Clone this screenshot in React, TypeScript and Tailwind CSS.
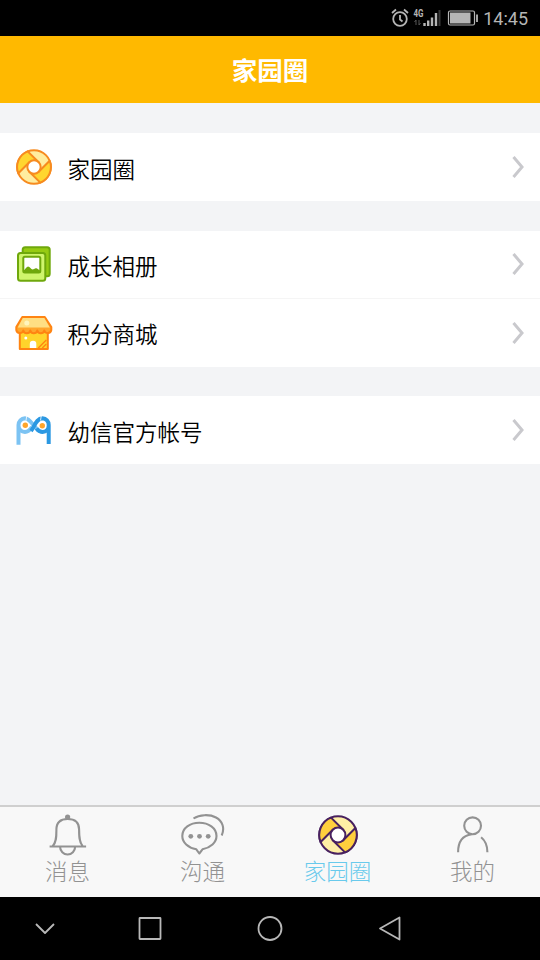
import React from "react";

const Aperture = ({ className, stroke, light, dark, width }: { className: string; stroke: string; light: string; dark: string; width: number }) => (
  <svg viewBox="-20 -20 40 40" className={className} fill="none" stroke={stroke} strokeWidth={width} strokeLinejoin="round">
    <circle r="18.7" fill={light} />
    <path d="M17.4 -7L5.2 5.2L0 7L-5.2 5.2L7 17.4A18.7 18.7 0 0 0 17.4 -7Z" fill={dark} />
    <path d="M-17.4 7L-5.2 -5.2L0 -7L5.2 -5.2L-7 -17.4A18.7 18.7 0 0 0 -17.4 7Z" fill={dark} />
    <circle r="7.4" fill="#fff" />
  </svg>
);

const Album = () => (
  <svg viewBox="0 0 40 40" className="size-10" fill="none" stroke="#6fa80c" strokeWidth="2" strokeLinejoin="round">
    <rect x="8.7" y="3.2" width="27" height="29" rx="2.5" fill="#96cb12" />
    <rect x="4" y="9" width="27.3" height="27.7" rx="2.5" fill="#cff56c" />
    <rect x="9.3" y="12.8" width="17" height="15.7" rx="1.5" fill="#fff" />
    <path d="M9.5 26.5C11.5 25.5 12 23 14 22.5C16 22.5 17 25.5 18.5 25.5S21 23.5 23 24.5L26 26.5V28.5H9.5Z" fill="#6fa80c" stroke="none" />
  </svg>
);

const Shop = () => (
  <svg viewBox="0.7 0 40 40" className="size-10" fill="none" stroke="#ff8412" strokeWidth="2" strokeLinejoin="round">
    <path d="M6.5 17H34.5V36H6.5Z" fill="#ffd42b" />
    <path d="M25 35L33 27M29 35L33 31" strokeWidth="1.3" />
    <path d="M9 4H31.5L38 14V17A3.6 3.6 0 0 1 31 17.5A3.6 3.6 0 0 1 24 17.5A3.6 3.6 0 0 1 17 17.5A3.6 3.6 0 0 1 10 17.5A3.6 3.6 0 0 1 3 17V14Z" fill="#ffa62c" />
    <path d="M9.5 5H31L36.5 14.5H4.5Z" fill="#ffdf83" stroke="none" />
    <circle cx="13.5" cy="10" r="2.5" fill="#fff5bd" stroke="none" />
    <circle cx="12.5" cy="25" r="1.5" fill="#fff" stroke="none" />
    <path d="M16.5 35V31A3.2 3.2 0 0 1 23 31V35Z" fill="#fff" stroke="none" />
  </svg>
);

const Official = () => (
  <svg viewBox="0 0 40 40" className="size-10" fill="none" strokeWidth="4">
    <path d="M4.5 34.7V15A6.7 6.7 0 0 1 11 8.3C17 8.3 22 22 28.5 22M4.5 15.5A6.7 6.7 0 0 0 11 22C14 22 16 20 18 17" stroke="#7cc3f3" />
    <path d="M17 21C20.5 17 22 8.3 28.5 8.3A6.4 6.4 0 0 1 34.7 15V34M34.7 15.5A6.5 6.5 0 0 1 28.5 22C26 22 23.5 20 22.5 18.5" stroke="#2b98e2" />
    <path d="M12.8 5.5L12 10.5M27.3 5.5L26.5 10.5" stroke="#fff" strokeWidth="0.8" />
    <circle cx="11.3" cy="15.2" r="2.7" fill="#ffa52b" />
    <circle cx="28.3" cy="15.7" r="2.7" fill="#ffa52b" />
  </svg>
);

const Bell = () => (
  <svg viewBox="0.4 0 44 44" className="size-11" fill="none" stroke="#929292" strokeWidth="2.1">
    <circle cx="22" cy="4" r="2.6" fill="#929292" stroke="none" />
    <path d="M4 33.5H40.5M7 33.2C11 29 10.8 23 10.8 16.5C10.8 9.5 15 6 22 6S33.5 9.5 33.5 16.5C33.5 23 33.5 29 37 33.2M14.5 34A7.5 7.5 0 0 0 29.5 34" />
  </svg>
);

const Chat = () => (
  <svg viewBox="0.5 0 44 44" className="size-11" fill="none" stroke="#929292" strokeWidth="2.1" strokeLinejoin="round">
    <path d="M18.8 40.5L15.8 36.3C7.5 34.5 1.8 29.5 1.8 23C1.8 15 9.5 9.8 18.8 9.8S36 15 36 23C36 29.5 30 34.5 22 36.3Z" />
    <path d="M13 5.5C19 1.5 29 1 35.5 4.5C42 8 44.5 15 41.2 22.5" />
    <g fill="#929292" stroke="none">
      <circle cx="10.3" cy="23.3" r="2.4" />
      <circle cx="19" cy="23.3" r="2.4" />
      <circle cx="27.7" cy="23.3" r="2.4" />
    </g>
  </svg>
);

const Person = () => (
  <svg viewBox="0.4 0 44 44" className="size-11" fill="none" stroke="#929292" strokeWidth="2.1">
    <circle cx="22" cy="12.8" r="8.4" />
    <path d="M7.5 39.3C7.5 29 12 22.5 21 21.3M30.5 24.3C34.5 27.5 36.8 32.5 36.8 39.3" />
  </svg>
);

const Row = ({ icon, label }: { icon: React.ReactNode; label: string }) => (
  <div className="flex h-[68px] items-center bg-white pl-3.5 pr-4">
    <div className="flex size-10 shrink-0 items-center justify-center">{icon}</div>
    <span className="ml-[13.5px] flex-1 pt-px text-[22.5px] font-[350] leading-8 text-black">{label}</span>
    <svg viewBox="0 0 12 24" className="h-6 w-3" fill="none" stroke="#c9c9cd" strokeWidth="3">
      <path d="M1.5 2L10 12L1.5 22" />
    </svg>
  </div>
);

const Tab = ({ icon, label, active }: { icon: React.ReactNode; label: string; active?: boolean }) => (
  <div className="flex flex-1 flex-col items-center pt-1.5">
    <div className="flex size-11 items-center justify-center">{icon}</div>
    <span className={active ? "-mt-0.5 text-[22.5px] font-light leading-[30px] text-[#69caec]" : "-mt-0.5 text-[22.5px] font-light leading-[30px] text-[#929292]"}>{label}</span>
  </div>
);

const StatusBar = () => (
  <div className="flex h-9 items-center justify-end bg-black pr-3 text-[#b5b5b5]">
    <svg viewBox="0 0 90 24" className="h-6 w-[90px]" fill="none" stroke="#b5b5b5" strokeWidth="1.8">
      <circle cx="10" cy="13" r="6.8" />
      <path d="M10 9V13.5L12.5 15.5M2 7L6 3.5M14 3.5L18 7" />
      <text x="23.5" y="11" fontSize="10" fontWeight="700" fontFamily="Roboto" textLength="10" lengthAdjust="spacingAndGlyphs" fill="#b5b5b5" stroke="none">4G</text>
      <path d="M26 14V19M24.5 16L26 14M29 14V19M29 19L30.5 17" stroke="#555" strokeWidth="1" />
      <path d="M34.5 17V20M38.2 14.5V20M42 11.5V20M46 7V20" strokeWidth="2.4" />
      <path d="M49.5 4V20" stroke="#383838" strokeWidth="2" />
      <rect x="58.5" y="5" width="26" height="14" rx="1.5" strokeWidth="1.2" />
      <path d="M60 6.5H80.5V17.5H60Z" fill="#b5b5b5" stroke="none" />
      <path d="M87 8.5V16" />
    </svg>
    <span className="ml-[3px] font-[Roboto] text-[18px]">14:45</span>
  </div>
);

const NavBar = () => (
  <div className="h-[63px] bg-black">
    <svg viewBox="0 0 540 63" className="h-[63px] w-[540px]" fill="none" stroke="#b8b8b8" strokeWidth="1.8" strokeLinejoin="round">
      <path d="M36 27L45 36L54 27" />
      <rect x="139.5" y="21" width="21" height="21" rx="0.5" />
      <circle cx="270" cy="31.5" r="11.5" />
      <path d="M380 31.5L399.5 20.5V42.5Z" />
    </svg>
  </div>
);

const App = () => {
  return (
    <div className="flex h-[960px] w-[540px] flex-col overflow-hidden bg-[#f3f4f6] font-['Noto_Sans_CJK_SC',sans-serif]">
      <StatusBar />
      <div className="flex h-[67px] items-center justify-center bg-[#ffb900] text-[25.5px] font-bold text-white">家园圈</div>
      <div className="flex flex-1 flex-col gap-[29.5px] pt-[30px]">
        <Row icon={<Aperture className="size-9" stroke="#f78b1f" light="#ffed9f" dark="#ffd62f" width={2.2} />} label="家园圈" />
        <div className="divide-y divide-[#f5f5f5]">
          <Row icon={<Album />} label="成长相册" />
          <Row icon={<Shop />} label="积分商城" />
        </div>
        <Row icon={<Official />} label="幼信官方帐号" />
      </div>
      <div className="flex h-[92px] border-t-2 border-[#cfcfcf] bg-[#f8f8f8]">
        <Tab icon={<Bell />} label="消息" />
        <Tab icon={<Chat />} label="沟通" />
        <Tab icon={<Aperture className="size-10" stroke="#48215f" light="#ffefa5" dark="#ffcf3d" width={2} />} label="家园圈" active />
        <Tab icon={<Person />} label="我的" />
      </div>
      <NavBar />
    </div>
  );
};

export default App;
